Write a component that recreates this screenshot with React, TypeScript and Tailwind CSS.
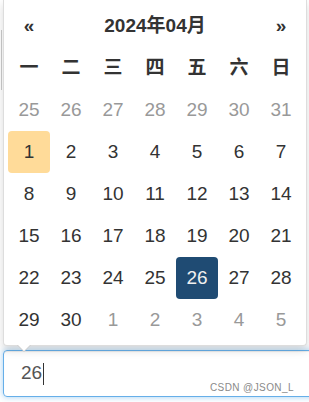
import React from 'react';

const weekdays = ['一', '二', '三', '四', '五', '六', '日'];

type Day = { n: number; muted?: boolean; today?: boolean; active?: boolean };

const weeks: Day[][] = [
  [25, 26, 27, 28, 29, 30, 31].map((n) => ({ n, muted: true })),
  [1, 2, 3, 4, 5, 6, 7].map((n) => ({ n, today: n === 1 })),
  [8, 9, 10, 11, 12, 13, 14].map((n) => ({ n })),
  [15, 16, 17, 18, 19, 20, 21].map((n) => ({ n })),
  [22, 23, 24, 25, 26, 27, 28].map((n) => ({ n, active: n === 26 })),
  [
    { n: 29 },
    { n: 30 },
    ...[1, 2, 3, 4, 5].map((n) => ({ n, muted: true })),
  ],
];

function DayCell({ day }: { day: Day }) {
  const cls = [
    'flex h-[42px] w-[42px] items-center justify-center rounded-[4px]',
    day.muted ? 'text-[#999]' : 'text-[#333]',
    day.today ? 'bg-[#ffdb99]' : '',
    day.active ? 'bg-[#1f4b73] text-[#f0f0f0]' : '',
  ]
    .filter(Boolean)
    .join(' ');
  return <div className={cls}>{day.n}</div>;
}

export default function App() {
  return (
    <div
      className="relative h-[402px] w-[309px] overflow-hidden bg-white"
      style={{ fontFamily: '"Liberation Sans", Arial, "Noto Sans CJK SC", sans-serif' }}
    >
      {/* traces of the page underneath */}
      <div className="absolute left-[1px] top-[30px] h-[60px] w-px bg-[#ccc]" />

      <div className="relative z-10 ml-[3px] w-[304px] rounded-b-[4px] border-x border-b border-[#ddd] bg-white px-[4px] pb-[4px] pt-[5px] text-[19px] shadow-[0_4px_10px_rgba(0,0,0,0.15)]">
        <div className="flex h-[42px] items-center font-bold text-[#333]">
          <div className="flex w-[42px] justify-center">«</div>
          <div className="flex flex-1 justify-center">2024年04月</div>
          <div className="flex w-[42px] justify-center">»</div>
        </div>
        <div className="grid grid-cols-7 font-bold text-[#333]">
          {weekdays.map((w) => (
            <div key={w} className="flex h-[42px] items-center justify-center">
              {w}
            </div>
          ))}
        </div>
        {weeks.map((week, i) => (
          <div key={i} className="grid grid-cols-7">
            {week.map((d, j) => (
              <DayCell key={j} day={d} />
            ))}
          </div>
        ))}
        {/* arrow */}
        <div className="absolute bottom-[-7px] left-[13px] h-0 w-0 border-x-[7px] border-t-[7px] border-x-transparent border-t-[#ccc]" />
        <div className="absolute bottom-[-6px] left-[14px] h-0 w-0 border-x-[6px] border-t-[6px] border-x-transparent border-t-white" />
      </div>

      <div className="ml-[3px] mt-[4px] flex h-[47px] w-[320px] items-center rounded-[4px] border border-[#66afe9] pl-[17px] text-[19px] text-[#555] shadow-[inset_0_1px_1px_rgba(0,0,0,0.075),0_0_6px_rgba(102,175,233,0.6)]">
        <span>26</span>
        <span className="ml-px h-[22px] w-px bg-[#333]" />
      </div>

      <div className="absolute left-[210px] top-[380px] text-[10px] tracking-[0.4px] text-[#8a8a8a]">
        CSDN @JSON_L
      </div>
    </div>
  );
}
